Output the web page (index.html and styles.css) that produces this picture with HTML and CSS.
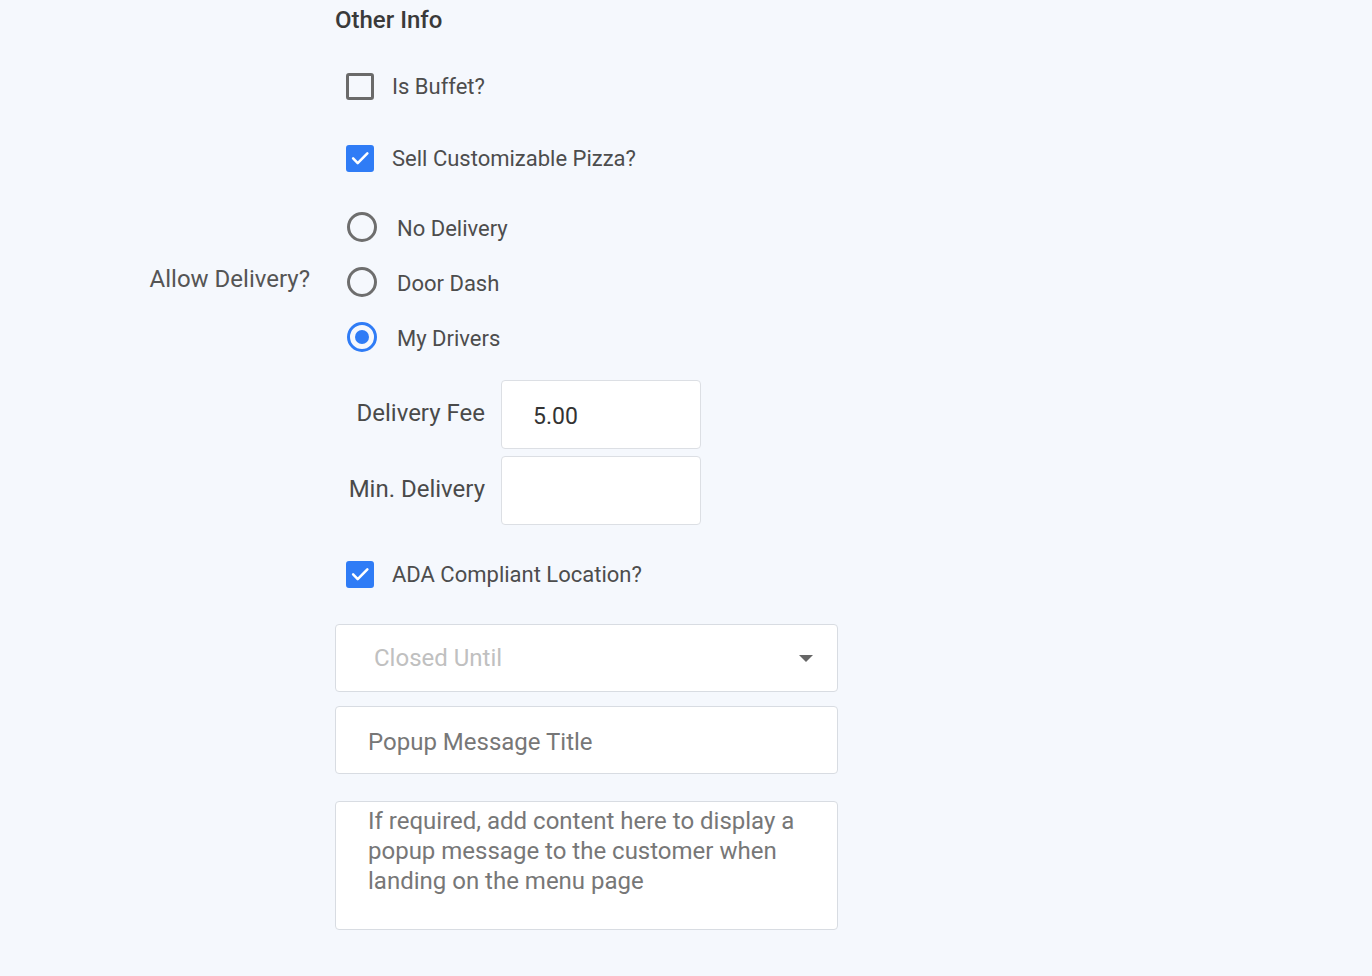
FILE: index.html
```html
<!DOCTYPE html>
<html lang="en">
<head>
<meta charset="utf-8">
<title>Other Info</title>
<link rel="stylesheet" href="styles.css">
</head>
<body>
<div class="form">
  <div class="side"></div>
  <div class="main">
    <div class="title">Other Info</div>

    <label class="check-row first">
      <span class="box"></span>
      <span class="text">Is Buffet?</span>
    </label>
    <label class="check-row">
      <span class="box checked"><svg viewBox="0 0 24 24" width="24" height="24"><path d="M4.5 12.5l5 5L20 7" fill="none" stroke="#fff" stroke-width="2.8" stroke-linecap="round" stroke-linejoin="round"/></svg></span>
      <span class="text">Sell Customizable Pizza?</span>
    </label>
  </div>

  <div class="side delivery-label">Allow Delivery?</div>
  <div class="main radios">
    <label class="radio-row"><span class="radio"></span><span class="text">No Delivery</span></label>
    <label class="radio-row"><span class="radio"></span><span class="text">Door Dash</span></label>
    <label class="radio-row"><span class="radio on"><span class="dot"></span></span><span class="text">My Drivers</span></label>
  </div>

  <div class="side"></div>
  <div class="main">
    <div class="fees">
      <div class="fee-label">Delivery Fee</div>
      <div class="fee-input">5.00</div>
      <div class="fee-label">Min. Delivery</div>
      <div class="fee-input"></div>
    </div>

    <label class="check-row ada">
      <span class="box checked"><svg viewBox="0 0 24 24" width="24" height="24"><path d="M4.5 12.5l5 5L20 7" fill="none" stroke="#fff" stroke-width="2.8" stroke-linecap="round" stroke-linejoin="round"/></svg></span>
      <span class="text">ADA Compliant Location?</span>
    </label>

    <div class="field select">
      <span class="placeholder-light">Closed Until</span>
      <span class="caret"></span>
    </div>
    <div class="field popup">
      <span class="placeholder">Popup Message Title</span>
    </div>
    <div class="field textarea">
      <span class="placeholder">If required, add content here to display a popup message to the customer when landing on the menu page</span>
    </div>
  </div>
</div>
</body>
</html>
```

FILE: styles.css
```css
html, body {
  margin: 0;
  padding: 0;
  background: #f5f8fd;
}
body {
  font-family: Roboto, "Liberation Sans", Arial, sans-serif;
  color: #4a4a4a;
  font-size: 22px;
  width: 1372px;
  height: 976px;
  overflow: hidden;
}
.form {
  display: grid;
  grid-template-columns: 335px 503px;
}
.side {
  box-sizing: border-box;
}
.main {
  display: flex;
  flex-direction: column;
}
.title {
  height: 40px;
  line-height: 40px;
  font-weight: 500;
  font-size: 24px;
  color: #3a3a3a;
  margin-bottom: 10px;
}
.check-row {
  height: 72px;
  display: flex;
  align-items: center;
  padding-left: 11px;
  gap: 18px;
}
.check-row .text {
  color: #4d4d4d;
  font-size: 22px;
}
.box {
  box-sizing: border-box;
  width: 28px;
  height: 27px;
  border: 3px solid #6a6a6a;
  border-radius: 3px;
  display: flex;
  align-items: center;
  justify-content: center;
}
.box.checked {
  background: #2f7cf6;
  border-color: #2f7cf6;
}
.delivery-label {
  display: flex;
  align-items: center;
  justify-content: flex-end;
  padding-right: 25px;
  margin-top: 0;
  margin-bottom: 1px;
  color: #555;
  font-size: 24px;
}
.radios {
  margin-top: 5px;
}
.radio-row {
  height: 55px;
  display: flex;
  align-items: center;
  padding-left: 12px;
  gap: 20px;
}
.radio-row .text {
  color: #4d4d4d;
  font-size: 22px;
  padding-top: 4px;
}
.radio {
  box-sizing: border-box;
  width: 30px;
  height: 30px;
  border: 3px solid #6e6e6e;
  border-radius: 50%;
  display: flex;
  align-items: center;
  justify-content: center;
}
.radio.on {
  border-color: #2f7cf6;
}
.radio .dot {
  width: 14px;
  height: 14px;
  border-radius: 50%;
  background: #2f7cf6;
}
.fees {
  margin-top: 16px;
  display: grid;
  grid-template-columns: 150px 200px;
  column-gap: 16px;
  row-gap: 7px;
}
.fee-label {
  display: flex;
  align-items: center;
  justify-content: flex-end;
  font-size: 24px;
  color: #4a4a4a;
  padding-bottom: 4px;
}
.fee-input {
  box-sizing: border-box;
  height: 69px;
  background: #fff;
  border: 1px solid #dcdfe4;
  border-radius: 4px;
  display: flex;
  align-items: center;
  padding-left: 31px;
  padding-top: 3px;
  font-size: 23px;
  color: #333;
}
.check-row.ada {
  height: 50px;
  margin-top: 24px;
}
.field {
  box-sizing: border-box;
  width: 503px;
  background: #fff;
  border: 1px solid #d8dce2;
  border-radius: 4px;
  font-size: 24px;
}
.select {
  height: 68px;
  margin-top: 25px;
  display: flex;
  align-items: center;
  padding-left: 38px;
  padding-right: 24px;
  justify-content: space-between;
}
.placeholder-light {
  color: #c0c0c0;
}
.caret {
  width: 0;
  height: 0;
  border-left: 7px solid transparent;
  border-right: 7px solid transparent;
  border-top: 7px solid #666;
}
.popup {
  height: 68px;
  margin-top: 14px;
  display: flex;
  align-items: center;
  padding-left: 32px;
  padding-top: 3px;
}
.placeholder {
  color: #777;
}
.textarea {
  height: 129px;
  margin-top: 27px;
  padding: 4px 30px 0 32px;
  line-height: 30px;
}
```
